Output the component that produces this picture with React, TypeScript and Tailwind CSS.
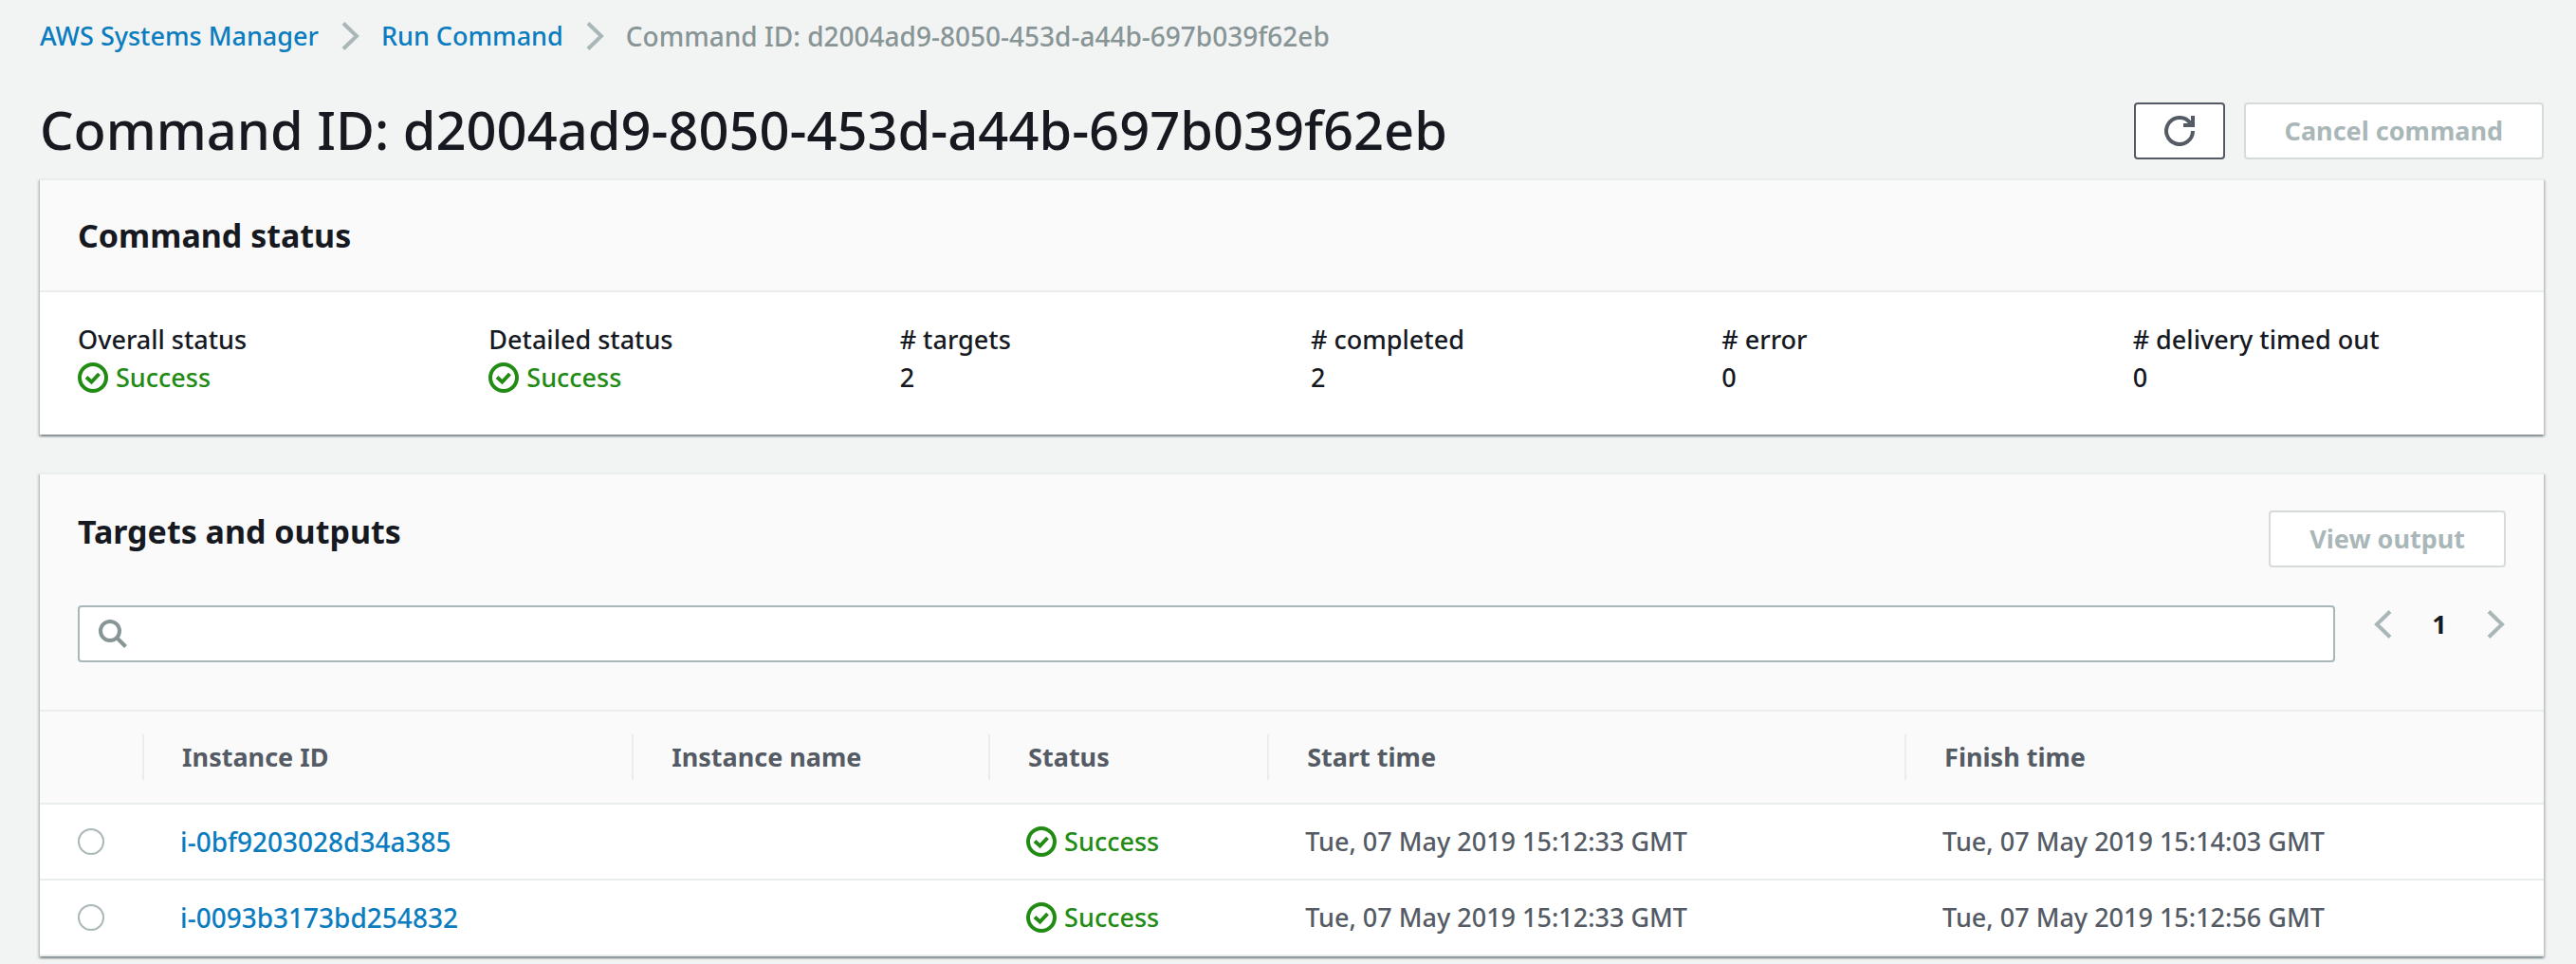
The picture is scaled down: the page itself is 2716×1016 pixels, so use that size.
import React from "react";

const FONT = "font-['Noto_Sans',sans-serif]";

function Chevron({ dir = "right" }: { dir?: "left" | "right" }) {
  return (
    <svg width="22" height="32" viewBox="0 0 22 32" fill="none" stroke="#aab7b8" strokeWidth="4" aria-hidden="true">
      {dir === "right" ? <path d="M4 2.5 18 16 4 29.5" /> : <path d="M18 2.5 4 16 18 29.5" />}
    </svg>
  );
}

function Success() {
  return (
    <span className="flex items-center gap-2 text-[#218b14]">
      <svg width="32" height="32" viewBox="0 0 32 32" fill="none" stroke="currentColor" strokeWidth="4" aria-hidden="true">
        <circle cx="16" cy="16" r="14" />
        <path d="m9 15.5 5.5 5 8-8.5" />
      </svg>
      Success
    </span>
  );
}

const card =
  "border-t-2 border-[#eaeded] bg-white shadow-[0_2px_2px_0_rgba(0,28,36,0.3),2px_2px_2px_0_rgba(0,28,36,0.15),-2px_2px_2px_0_rgba(0,28,36,0.15)]";

const ghostButton =
  "h-15 shrink-0 rounded border-2 border-[#d5dbdb] bg-white px-[41px] text-[27px] leading-10 font-bold text-[#aab7b8]";

const stats: { label: string; value: React.ReactNode }[] = [
  { label: "Overall status", value: <Success /> },
  { label: "Detailed status", value: <Success /> },
  { label: "# targets", value: "2" },
  { label: "# completed", value: "2" },
  { label: "# error", value: "0" },
  { label: "# delivery timed out", value: "0" },
];

const columns = ["Instance ID", "Instance name", "Status", "Start time", "Finish time"];

const rows = [
  { id: "i-0bf9203028d34a385", start: "Tue, 07 May 2019 15:12:33 GMT", finish: "Tue, 07 May 2019 15:14:03 GMT" },
  { id: "i-0093b3173bd254832", start: "Tue, 07 May 2019 15:12:33 GMT", finish: "Tue, 07 May 2019 15:12:56 GMT" },
];

export default function App() {
  return (
    <div className={`min-h-screen bg-[#f2f3f3] pr-[34px] pl-[42px] pt-[18px] text-[27px] leading-10 font-medium text-[#16191f] ${FONT}`}>
      <nav aria-label="Breadcrumb">
        <ol className="flex items-center gap-[22px]">
          <li className="flex items-center gap-[22px]">
            <a href="#systems-manager" className="text-[#0a7cc0]">AWS Systems Manager</a>
            <Chevron />
          </li>
          <li className="flex items-center gap-[22px]">
            <a href="#run-command" className="text-[#0a7cc0]">Run Command</a>
            <Chevron />
          </li>
          <li aria-current="page" className="text-[28px] text-[#879596]">
            Command ID: d2004ad9-8050-453d-a44b-697b039f62eb
          </li>
        </ol>
      </nav>

      <header className="mt-[42px] mb-3 flex items-center justify-between">
        <h1 className="pb-1 text-[56px] leading-[72px] font-medium">Command ID: d2004ad9-8050-453d-a44b-697b039f62eb</h1>
        <div className="flex gap-5">
          <button
            type="button"
            aria-label="Refresh"
            className="flex h-15 w-24 items-center justify-center rounded border-2 border-[#545b64] bg-white text-[#545b64]"
          >
            <svg width="32" height="32" viewBox="0 0 32 32" fill="none" stroke="currentColor" strokeWidth="4" aria-hidden="true">
              <path d="M30 16A14 14 0 1 1 27.5 8" />
              <path d="M30 0v10H20" />
            </svg>
          </button>
          <button type="button" disabled className={ghostButton}>
            Cancel command
          </button>
        </div>
      </header>

      <section className={card}>
        <div className="border-b-2 border-[#eaeded] bg-[#fafafa] px-10 py-[34px]">
          <h2 className="text-[34px] leading-[48px] font-bold">Command status</h2>
        </div>
        <dl className="grid grid-cols-6 pt-[30px] pb-10 pl-10">
          {stats.map((s) => (
            <div key={s.label}>
              <dt>{s.label}</dt>
              <dd>{s.value}</dd>
            </div>
          ))}
        </dl>
      </section>

      <section className={`mt-10 ${card}`}>
        <div className="bg-[#fafafa] px-10 pt-[38px] pb-[50px]">
          <div className="flex items-start justify-between">
            <h2 className="text-[34px] leading-[44px] font-bold">Targets and outputs</h2>
            <button type="button" disabled className={ghostButton}>
              View output
            </button>
          </div>
          <div className="mt-10 flex items-start gap-10">
            <label className="flex h-15 flex-1 items-center gap-4 rounded border-2 border-[#aab7b8] bg-white px-5">
              <svg width="30" height="30" viewBox="0 0 30 30" fill="none" stroke="#879596" strokeWidth="4" aria-hidden="true">
                <circle cx="12" cy="12" r="10" />
                <path d="m19 19 9.5 9.5" />
              </svg>
              <input type="search" aria-label="Search targets" className="min-w-0 flex-1 bg-transparent outline-none" />
            </label>
            <div className="flex w-35 items-center justify-between">
              <button type="button" aria-label="Previous page"><Chevron dir="left" /></button>
              <span className="font-bold">1</span>
              <button type="button" aria-label="Next page"><Chevron /></button>
            </div>
          </div>
        </div>

        <table className="w-full table-fixed border-collapse text-left text-[#545b64]">
          <colgroup>
            <col className="w-[4.17%]" />
            <col className="w-[19.55%]" />
            <col className="w-[14.24%]" />
            <col className="w-[11.14%]" />
            <col className="w-[25.45%]" />
            <col />
          </colgroup>
          <thead className="border-y-2 border-[#eaeded] bg-[#fafafa]">
            <tr>
              <td className="h-[98px] p-0">
                <div className="h-12 border-r-2 border-[#eaeded]" />
              </td>
              {columns.map((c) => (
                <th key={c} scope="col" className="p-0 font-bold">
                  <div className={`flex h-12 items-center pl-10 ${c === "Finish time" ? "" : "border-r-2 border-[#eaeded]"}`}>{c}</div>
                </th>
              ))}
            </tr>
          </thead>
          <tbody>
            {rows.map((r) => (
              <tr key={r.id} className="border-b-2 border-[#eaeded]">
                <td className="h-20 py-0 pr-0 pl-10">
                  <input
                    type="radio"
                    name="target"
                    aria-label={`Select ${r.id}`}
                    className="block size-7 appearance-none rounded-full border-2 border-[#aab7b8] bg-white"
                  />
                </td>
                <td className="py-0 pr-0 pl-[38px] text-[28px]">
                  <a href={`#${r.id}`} className="text-[#0a7cc0]">{r.id}</a>
                </td>
                <td />
                <td className="py-0 pr-0 pl-[38px]"><Success /></td>
                <td className="py-0 pr-0 pl-[38px]">{r.start}</td>
                <td className="py-0 pr-0 pl-[38px]">{r.finish}</td>
              </tr>
            ))}
          </tbody>
        </table>
      </section>
    </div>
  );
}
